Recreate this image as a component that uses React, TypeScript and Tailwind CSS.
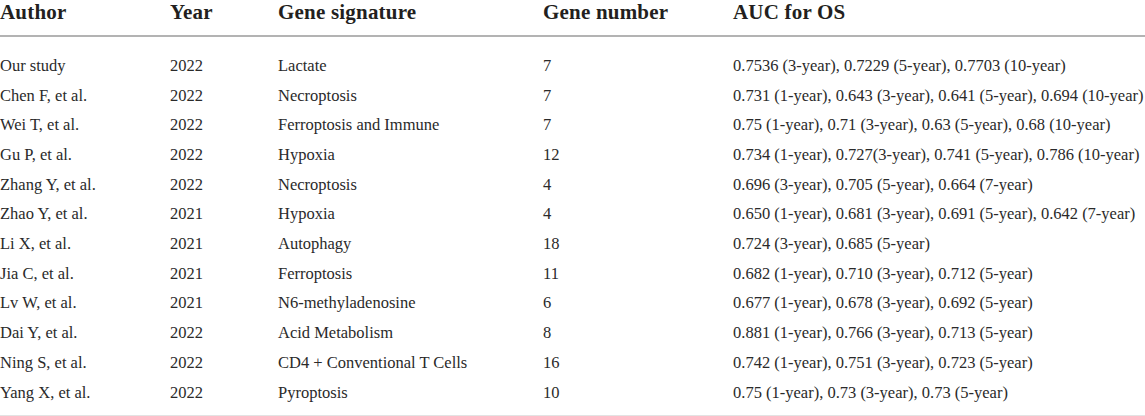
const rows: [string, string, string, string, string][] = [
  ["Our study", "2022", "Lactate", "7", "0.7536 (3-year), 0.7229 (5-year), 0.7703 (10-year)"],
  ["Chen F, et al.", "2022", "Necroptosis", "7", "0.731 (1-year), 0.643 (3-year), 0.641 (5-year), 0.694 (10-year)"],
  ["Wei T, et al.", "2022", "Ferroptosis and Immune", "7", "0.75 (1-year), 0.71 (3-year), 0.63 (5-year), 0.68 (10-year)"],
  ["Gu P, et al.", "2022", "Hypoxia", "12", "0.734 (1-year), 0.727(3-year), 0.741 (5-year), 0.786 (10-year)"],
  ["Zhang Y, et al.", "2022", "Necroptosis", "4", "0.696 (3-year), 0.705 (5-year), 0.664 (7-year)"],
  ["Zhao Y, et al.", "2021", "Hypoxia", "4", "0.650 (1-year), 0.681 (3-year), 0.691 (5-year), 0.642 (7-year)"],
  ["Li X, et al.", "2021", "Autophagy", "18", "0.724 (3-year), 0.685 (5-year)"],
  ["Jia C, et al.", "2021", "Ferroptosis", "11", "0.682 (1-year), 0.710 (3-year), 0.712 (5-year)"],
  ["Lv W, et al.", "2021", "N6-methyladenosine", "6", "0.677 (1-year), 0.678 (3-year), 0.692 (5-year)"],
  ["Dai Y, et al.", "2022", "Acid Metabolism", "8", "0.881 (1-year), 0.766 (3-year), 0.713 (5-year)"],
  ["Ning S, et al.", "2022", "CD4 + Conventional T Cells", "16", "0.742 (1-year), 0.751 (3-year), 0.723 (5-year)"],
  ["Yang X, et al.", "2022", "Pyroptosis", "10", "0.75 (1-year), 0.73 (3-year), 0.73 (5-year)"],
];

const cols = "grid grid-cols-[170px_108px_265px_190px_1fr]";

export default function App(): JSX.Element {
  return (
    <div className="w-[1145px] h-[416px] bg-white text-[#231f20] font-['Liberation_Serif',serif]">
      <div className={`${cols} h-[37px] items-start border-b-2 border-[#b3b3b3] text-[21px] font-bold leading-[24px] tracking-[0.2px]`}>
        <div>Author</div>
        <div>Year</div>
        <div>Gene signature</div>
        <div>Gene number</div>
        <div>AUC for OS</div>
      </div>
      <div className="pt-[14.5px] pb-[7.5px] border-b border-[#e3e3e3]">
        {rows.map((r) => (
          <div key={r[0]} className={`${cols} h-[29.7px] items-center text-[16.5px] text-[#2a2a2a]`}>
            {r.map((c, i) => (
              <div key={i} className="whitespace-nowrap">{c}</div>
            ))}
          </div>
        ))}
      </div>
    </div>
  );
}
